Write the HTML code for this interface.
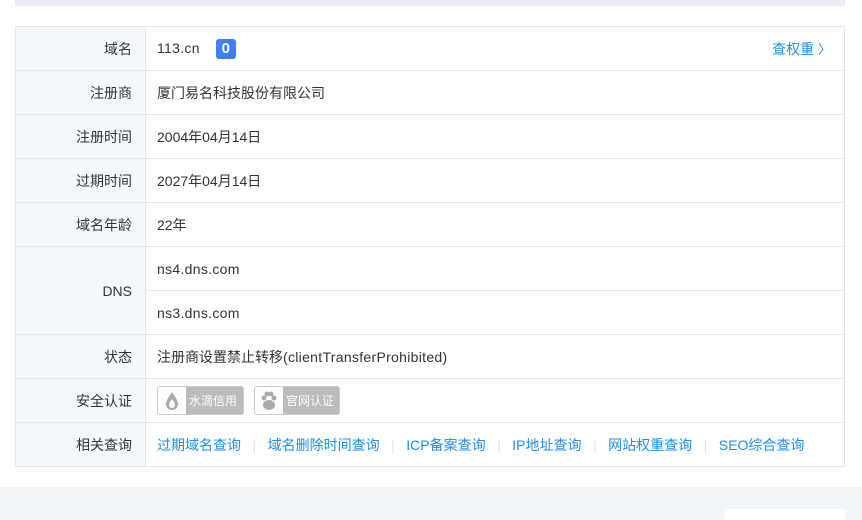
<!DOCTYPE html><html><head><meta charset="utf-8"><style>
*{margin:0;padding:0;box-sizing:border-box}
body{width:862px;height:520px;background:#fff;font-family:"Liberation Sans","Noto Sans CJK SC",sans-serif;font-size:14px;color:#333;position:relative;overflow:hidden}
.band{position:absolute;left:15px;top:0;width:830px;height:6px;background:#ecebf9}
table{position:absolute;left:15px;top:26px;width:830px;border-collapse:collapse;border:1px solid #e3e7ec}
td{border:1px solid #e3e7ec;height:44px;padding:0 11px}
td.l{width:130px;background:#f5f8fb;text-align:right;padding-right:13px}
.e{letter-spacing:0.3px}
a{color:#1e8ff5;text-decoration:none}
.b{display:inline-block;background:#3f7ef3;color:#fff;border-radius:3px;width:20px;height:20px;text-align:center;line-height:20px;font-weight:bold;margin-left:16px;font-size:15px}
.sep{color:#dde3ea;margin:0 11.5px}
.bd{display:inline-flex;align-items:center;height:29px;border:1px solid #ccc;border-radius:3px;background:#bbb;color:#fff;font-size:12px;vertical-align:middle;margin-right:10px}
.bd i{display:block;width:28px;height:27px;background:#fff;margin-right:3px;border-radius:2px 0 0 2px;position:relative}
.bot{position:absolute;left:0;top:487px;width:862px;height:33px;background:linear-gradient(#f3f4f6,#f2f6fa)}
.wb{position:absolute;left:725px;top:509px;width:120px;height:11px;background:#fff;border-radius:4px 4px 0 0}
</style></head><body>
<div class="band"></div>
<table>
<tr><td class="l">域名</td><td><span class="e">113.cn</span><span class="b">0</span><a style="float:right;margin-right:2px">查权重 <span style="font-size:13px">〉</span></a></td></tr>
<tr><td class="l">注册商</td><td>厦门易名科技股份有限公司</td></tr>
<tr><td class="l">注册时间</td><td>2004年04月14日</td></tr>
<tr><td class="l">过期时间</td><td>2027年04月14日</td></tr>
<tr><td class="l">域名年龄</td><td>22年</td></tr>
<tr><td class="l" rowspan="2">DNS</td><td class="e">ns4.dns.com</td></tr>
<tr><td class="e">ns3.dns.com</td></tr>
<tr><td class="l">状态</td><td>注册商设置禁止转移<span class="e">(clientTransferProhibited)</span></td></tr>
<tr><td class="l">安全认证</td><td><span class="bd" style="width:87px"><i><svg width="28" height="27" viewBox="0 0 28 27"><path d="M14 5C10 11 8 14 8 17a6 6 0 0 0 12 0c0-3-2-6-6-12z" fill="#aaa"/><path d="M14 12c-2 3-3 4-3 6a3 3 0 0 0 6 0c0-2-1-3-3-6z" fill="#fff"/></svg></i>水滴信用</span><span class="bd" style="width:86px"><i><svg width="28" height="27" viewBox="0 0 28 27"><circle cx="9" cy="11" r="2.5" fill="#aaa"/><circle cx="19" cy="11" r="2.5" fill="#aaa"/><circle cx="12" cy="7" r="2.5" fill="#aaa"/><circle cx="16" cy="7" r="2.5" fill="#aaa"/><ellipse cx="14" cy="18" rx="6" ry="5" fill="#aaa"/></svg></i>官网认证</span></td></tr>
<tr><td class="l">相关查询</td><td><a>过期域名查询</a><span class="sep">|</span><a>域名删除时间查询</a><span class="sep">|</span><a>ICP备案查询</a><span class="sep">|</span><a>IP地址查询</a><span class="sep">|</span><a>网站权重查询</a><span class="sep">|</span><a>SEO综合查询</a></td></tr>
</table>
<div class="bot"></div><div class="wb"></div>
</body></html>
